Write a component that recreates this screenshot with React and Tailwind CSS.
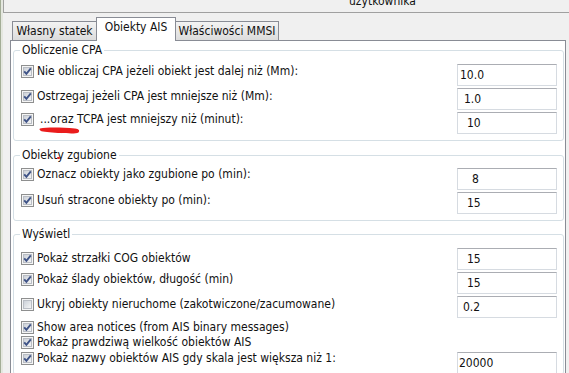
import React from "react";

function Check({ checked = true }) {
  return (
    <svg width="13" height="13" viewBox="0 0 13 13" className="shrink-0">
      <defs>
        <linearGradient id="cbg" x1="0" y1="0" x2="1" y2="1">
          <stop offset="0" stopColor="#c9ced6" />
          <stop offset="1" stopColor="#f7f7f7" />
        </linearGradient>
      </defs>
      <rect x="0.5" y="0.5" width="12" height="12" fill="#f5f5f5" stroke="#8e8f8f" />
      <rect x="2.5" y="2.5" width="8" height="8" fill="url(#cbg)" stroke="#b9bdc4" />
      {checked && (
        <path d="M3.2 6.3 L5.4 8.8 L9.8 3.4" fill="none" stroke="#3f5387" strokeWidth="1.9" />
      )}
    </svg>
  );
}

function Label({ text, checked = true, className = "", textClass = "" }) {
  return (
    <div className={"flex h-[14px] items-center gap-[3px] " + className}>
      <Check checked={checked} />
      <span className={"whitespace-nowrap leading-[14px] " + textClass}>{text}</span>
    </div>
  );
}

function Field({ value, pl }) {
  return (
    <div
      className="flex h-[22px] w-[100px] shrink-0 items-center border border-[#d6dbe1] border-t-[#abadb3] bg-white leading-[14px]"
      style={{ paddingLeft: pl }}
    >
      {value}
    </div>
  );
}

function Group({ title, className = "", children, legendExtra }) {
  return (
    <fieldset
      className={
        "mr-[1px] ml-[2px] rounded-[3px] border border-[#d5dfe5] pr-[6px] pl-[7px] " + className
      }
    >
      <legend className="relative ml-[-1px] px-[2px] leading-[14px]">
        {title}
        {legendExtra}
      </legend>
      {children}
    </fieldset>
  );
}

export default function App() {
  return (
    <div className="flex h-[373px] w-[569px] overflow-hidden bg-[#f0f0f0] text-[12px] text-[#111] [font-family:'DejaVu_Sans_Condensed','DejaVu_Sans',sans-serif]">
      <div className="flex w-[3px] shrink-0">
        <div className="w-[1px] bg-[#a3ad96]" />
        <div className="w-[2px] bg-[#e4e7df]" />
      </div>
      <div className="flex min-w-0 flex-1 flex-col">
        <div className="h-[13px] shrink-0 overflow-hidden border-b border-l border-[#a0a0a0]">
          <div className="mt-[-6px] pl-[345px] leading-[14px] whitespace-nowrap">użytkownika</div>
        </div>

        <div className="relative z-10 mt-[4px] ml-[9px] flex h-[24px] items-end">
          <div className="mb-[1px] flex h-[19px] w-[85px] items-center justify-center border border-b-0 border-[#898c95] bg-linear-to-b from-[#f3f3f3] to-[#dcdcdc] leading-[14px] whitespace-nowrap">
            Własny statek
          </div>
          <div className="relative z-10 -ml-[1px] flex h-[24px] w-[80px] items-start justify-center border border-b-0 border-[#898c95] bg-white pt-[2px] leading-[14px] whitespace-nowrap">
            Obiekty AIS
          </div>
          <div className="-ml-[1px] mb-[1px] flex h-[19px] w-[104px] items-center justify-center border border-b-0 border-[#898c95] bg-linear-to-b from-[#f3f3f3] to-[#dcdcdc] leading-[14px] whitespace-nowrap">
            Właściwości MMSI
          </div>
        </div>

        <div className="-mt-[1px] ml-[7px] flex w-[556px] flex-1 flex-col border border-[#898c95] bg-white">
          <Group title="Obliczenie CPA" className="mt-[2px] pt-[7px] pb-[6px]">
            <div className="flex flex-col gap-[2px]">
              <div className="flex items-start justify-between">
                <Label text="Nie obliczaj CPA jeżeli obiekt jest dalej niż (Mm):" />
                <Field value="10.0" pl={2} />
              </div>
              <div className="flex items-start justify-between">
                <Label className="mt-[1px]" text="Ostrzegaj jeżeli CPA jest mniejsze niż (Mm):" />
                <Field value="1.0" pl={6} />
              </div>
              <div className="relative flex items-start justify-between">
                <Label text="...oraz TCPA jest mniejszy niż (minut):" textClass="pl-[3px]" />
                <Field value="10" pl={9} />
                <svg
                  className="pointer-events-none absolute top-[14px] left-[18px]"
                  width="42"
                  height="9"
                  viewBox="0 0 42 9"
                >
                  <path
                    d="M1 2.6 C8 1.2 22 1.4 36 2.6 C40 3 41 5 39.5 6.4 C37 7.8 30 7.4 22 7 C14 6.6 6 6 2.5 5.2 C0.5 4.6 0 3.3 1 2.6 Z"
                    fill="#ea1c1c"
                  />
                </svg>
              </div>
            </div>
          </Group>

          <Group
            title="Obiekty zgubione"
            className="mt-[7px] pt-[6px] pb-[6px]"
            legendExtra={
              <span className="absolute top-[9px] left-[37px] h-[2px] w-[3px] rounded-full bg-[#e02020]" />
            }
          >
            <div className="flex flex-col gap-[2px]">
              <div className="flex items-start justify-between">
                <Label className="-mt-[1px]" text="Oznacz obiekty jako zgubione po (min):" />
                <Field value="8" pl={14} />
              </div>
              <div className="flex items-start justify-between">
                <Label className="mt-[1px]" text="Usuń stracone obiekty po (min):" />
                <Field value="15" pl={9} />
              </div>
            </div>
          </Group>

          <Group title="Wyświetl" className="mt-[6px] flex-1 pt-[7px]">
            <div className="flex flex-col">
              <div className="flex items-start justify-between">
                <Label className="mt-[3px]" text="Pokaż strzałki COG obiektów" />
                <Field value="15" pl={9} />
              </div>
              <div className="mt-[2px] flex items-start justify-between">
                <Label text="Pokaż ślady obiektów, długość (min)" />
                <Field value="15" pl={9} />
              </div>
              <div className="mt-[2px] flex items-start justify-between">
                <Label className="mt-[1px]" checked={false} text="Ukryj obiekty nieruchome (zakotwiczone/zacumowane)" />
                <Field value="0.2" pl={5} />
              </div>
              <Label className="mt-[2px]" text="Show area notices (from AIS binary messages)" />
              <Label className="mt-[1px]" text="Pokaż prawdziwą wielkość obiektów AIS" />
              <div className="mt-[3px] flex items-start justify-between">
                <Label className="-mt-[1px]" text="Pokaż nazwy obiektów AIS gdy skala jest większa niż 1:" />
                <Field value="20000" pl={1} />
              </div>
            </div>
          </Group>
        </div>
      </div>
    </div>
  );
}
